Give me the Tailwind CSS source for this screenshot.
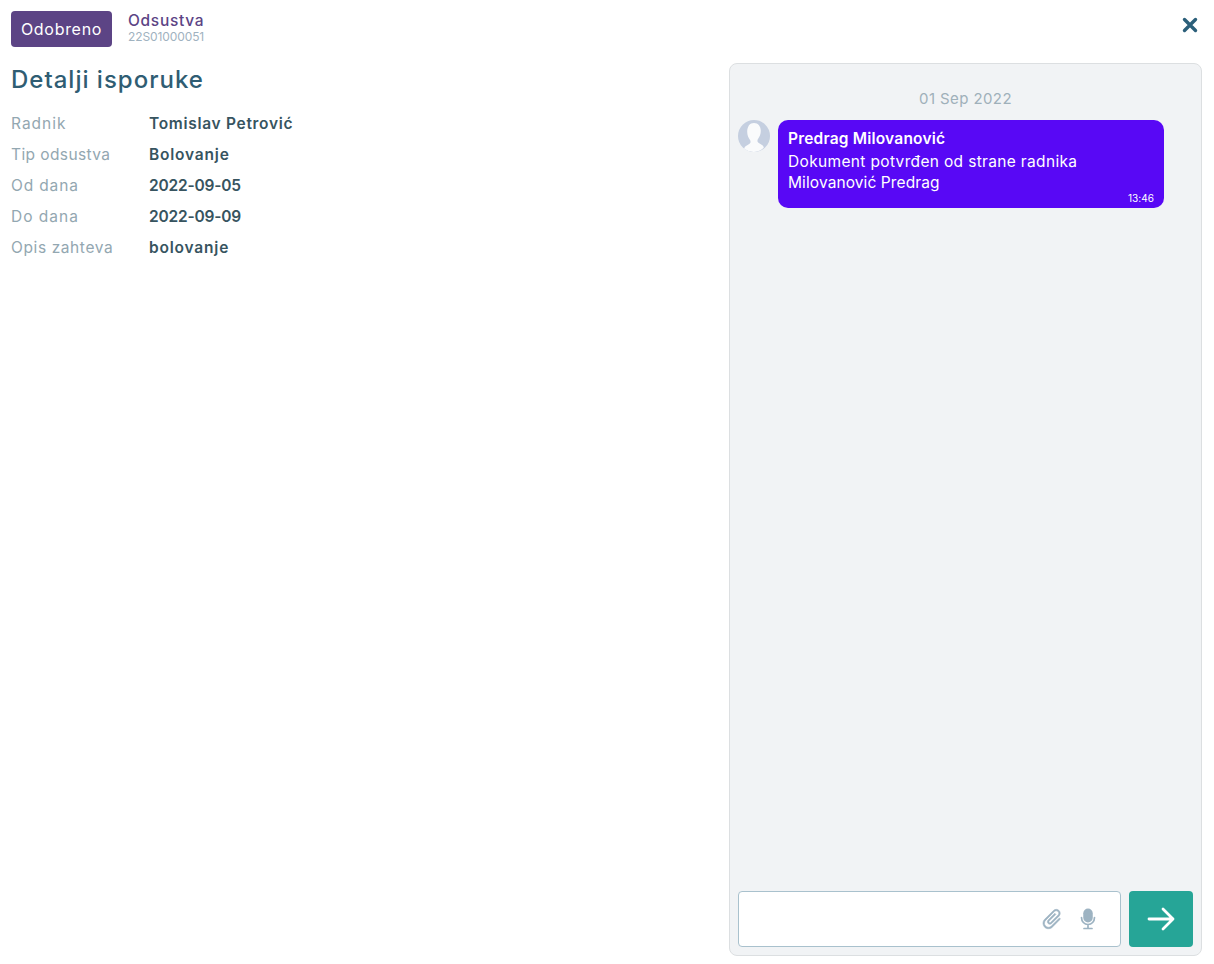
<!doctype html>
<html lang="en">
<head>
    <meta charset="UTF-8">
    <title>Detalji isporuke</title>
    <script src="https://cdn.jsdelivr.net/npm/@tailwindcss/browser@4"></script>
</head>
<body class="bg-white">
    <div class="w-[1214px] h-[964px] overflow-hidden relative flex font-['Inter','Liberation_Sans',sans-serif]">
        <div class="w-[729px] shrink-0 pl-[11px] pt-[11px]">
            <div class="flex items-start">
                <div class="w-[101px] h-9 pb-px rounded-[4px] bg-[#5c4485] text-white text-[16px] tracking-[0.7px] flex items-center justify-center">Odobreno</div>
                <div class="ml-4">
                    <div class="text-[15.500px] tracking-[0.7px] leading-[19px] font-medium text-[#5c4485]">Odsustva</div>
                    <div class="text-[12px] tracking-[-0.1px] leading-[14px] text-[#9fb2c0]">22S01000051</div>
                </div>
            </div>
            <h1 class="mt-[18px] text-[24px] tracking-[1px] leading-[30px] font-medium text-[#2f5d73]">Detalji isporuke</h1>
            <div class="mt-[13px] text-[15.500px] leading-[31px]">
                <div class="flex"><div class="w-[138px] text-[#93a7b1] tracking-[1px]">Radnik</div><div class="font-semibold text-[#37545f] tracking-[0.7px]">Tomislav Petrović</div></div>
                <div class="flex"><div class="w-[138px] text-[#93a7b1] tracking-[0.4px]">Tip odsustva</div><div class="font-semibold text-[#37545f] tracking-[0.8px]">Bolovanje</div></div>
                <div class="flex"><div class="w-[138px] text-[#93a7b1] tracking-[0.85px]">Od dana</div><div class="font-semibold text-[#37545f] tracking-[-0.2px]">2022-09-05</div></div>
                <div class="flex"><div class="w-[138px] text-[#93a7b1] tracking-[1px]">Do dana</div><div class="font-semibold text-[#37545f] tracking-[-0.2px]">2022-09-09</div></div>
                <div class="flex"><div class="w-[138px] text-[#93a7b1] tracking-[0.6px]">Opis zahteva</div><div class="font-semibold text-[#37545f] tracking-[0.8px]">bolovanje</div></div>
            </div>
        </div>
        <div class="w-[473px] shrink-0 mt-[63px] h-[893px] bg-[#f1f3f5] border border-[#dcdfe1] rounded-[8px] flex flex-col pl-2 pr-2 pb-2">
            <div class="text-center text-[15px] tracking-[0.4px] leading-5 text-[#9fb0ba] mt-[25px]">01 Sep 2022</div>
            <div class="flex mt-[11px] flex-1 items-start">
                <svg class="w-8 h-8 shrink-0" viewBox="0 0 32 32">
                    <circle cx="16" cy="16" r="16" fill="#c5cfe0"/>
                    <path d="M16 3c4.200 0 6.800 3.400 6.800 7.800 0 3.600-1.300 6.200-2.800 8.200-1 1.400-.6 3 .8 4l3.600 2.200c.8.6 1.200 1.400 1.400 2.600A16 16 0 0 1 16 32 16 16 0 0 1 6.200 28.800c.2-1.200.6-2 1.400-2.600l3.600-2.200c1.400-1 1.800-2.600.8-4-1.500-2-2.800-4.600-2.800-8.200C9.200 6.400 11.800 3 16 3z" fill="#fafbfc"/>
                </svg>
                <div class="ml-2 w-[386px] h-[88px] rounded-[10px] bg-[#5808f5] text-white pl-[10px] pt-[9px] relative">
                    <div class="text-[15.500px] tracking-[0.2px] leading-5 font-semibold">Predrag Milovanović</div>
                    <div class="mt-[2px] text-[15.500px] leading-[21px]">
                        <div class="tracking-[0.34px]">Dokument potvrđen od strane radnika</div>
                        <div class="tracking-[0.1px]">Milovanović Predrag</div>
                    </div>
                    <div class="absolute right-[10px] bottom-[3px] text-[10px] tracking-[0.05px] leading-[14px]">13:46</div>
                </div>
            </div>
            <div class="flex gap-2">
                <div class="w-[383px] h-14 bg-white border border-[#a9c1cd] rounded-[4px] flex items-center justify-end pr-[23px] gap-[15px]">
                    <svg class="w-6 h-6" viewBox="0 0 24 24" fill="#9db3c2" stroke="#9db3c2" stroke-width="0.500">
                        <path transform="rotate(45 12 12)" d="M16.500 6v11.500c0 2.210-1.790 4-4 4s-4-1.790-4-4V5c0-1.380 1.120-2.500 2.500-2.500s2.500 1.120 2.500 2.500v10.500c0 .55-.45 1-1 1s-1-.45-1-1V6H10v9.500c0 1.380 1.120 2.500 2.500 2.500s2.500-1.120 2.500-2.500V5c0-2.210-1.790-4-4-4S7 2.790 7 5v12.500c0 3.040 2.460 5.500 5.500 5.500s5.500-2.460 5.500-5.500V6h-1.500z"/>
                    </svg>
                    <svg class="w-[18px] h-[22px]" viewBox="0 0 18 22" fill="none">
                        <rect x="4.250" y="0.500" width="9.500" height="14" rx="4.750" fill="#9db3c2"/>
                        <path d="M2.500 9.500c0 4 2.800 7 6.500 7s6.500-3 6.500-7M9 16.500v3.500M5 20.500h8" stroke="#9db3c2" stroke-width="1.700" stroke-linecap="round"/>
                    </svg>
                </div>
                <div class="w-16 h-14 bg-[#26a597] rounded-[4px] flex items-center justify-center">
                    <svg class="w-7 h-7" viewBox="0 0 28 28" fill="none" stroke="#fff" stroke-width="2.800" stroke-linecap="round" stroke-linejoin="round">
                        <path d="M2 14h24M16 4l10 10-10 10"/>
                    </svg>
                </div>
            </div>
        </div>
        <svg class="absolute left-[1182px] top-[17px] w-4 h-4" viewBox="0 0 16 16" fill="none" stroke="#2b5f7a" stroke-width="3.400" stroke-linecap="round">
            <path d="M2.500 2.500l11 11M13.500 2.500l-11 11"/>
        </svg>
    </div>
</body>
</html>
